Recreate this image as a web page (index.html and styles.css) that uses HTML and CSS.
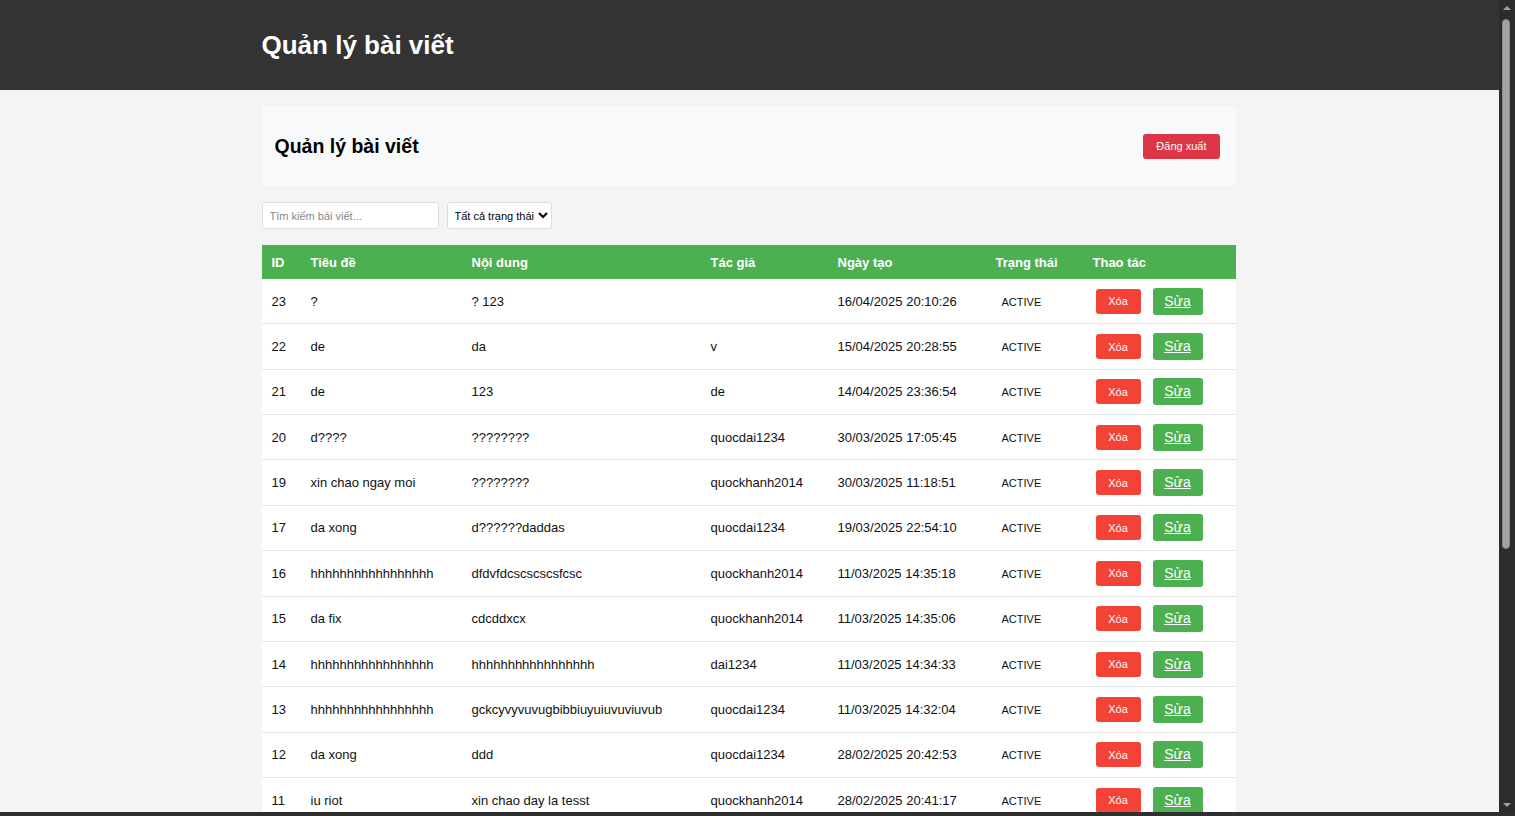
FILE: index.html
```html
<!DOCTYPE html>
<html lang="vi">
<head>
<meta charset="utf-8">
<title>Quản lý bài viết</title>
<link rel="stylesheet" href="styles.css">
</head>
<body>
<header class="topbar">
  <div class="container">
    <h1 class="brand">Quản lý bài viết</h1>
  </div>
</header>
<main class="container">
  <section class="panel">
    <h2 class="panel-title">Quản lý bài viết</h2>
    <button class="btn-logout">Đăng xuất</button>
  </section>
  <div class="filters">
    <input class="search" type="text" placeholder="Tìm kiếm bài viết...">
    <select class="status-select">
      <option>Tất cả trạng thái</option>
    </select>
  </div>
  <table class="posts">
    <colgroup>
      <col class="c-id"><col class="c-title"><col class="c-content"><col class="c-author"><col class="c-date"><col class="c-status"><col class="c-actions">
    </colgroup>
    <thead>
      <tr><th>ID</th><th>Tiêu đề</th><th>Nội dung</th><th>Tác giả</th><th>Ngày tạo</th><th>Trạng thái</th><th>Thao tác</th></tr>
    </thead>
    <tbody>
      <tr><td>23</td><td>?</td><td>? 123</td><td></td><td>16/04/2025 20:10:26</td><td><span class="status">ACTIVE</span></td><td><button class="btn-del">Xóa</button><a class="btn-edit" href="#">Sửa</a></td></tr>
      <tr><td>22</td><td>de</td><td>da</td><td>v</td><td>15/04/2025 20:28:55</td><td><span class="status">ACTIVE</span></td><td><button class="btn-del">Xóa</button><a class="btn-edit" href="#">Sửa</a></td></tr>
      <tr><td>21</td><td>de</td><td>123</td><td>de</td><td>14/04/2025 23:36:54</td><td><span class="status">ACTIVE</span></td><td><button class="btn-del">Xóa</button><a class="btn-edit" href="#">Sửa</a></td></tr>
      <tr><td>20</td><td>d????</td><td>????????</td><td>quocdai1234</td><td>30/03/2025 17:05:45</td><td><span class="status">ACTIVE</span></td><td><button class="btn-del">Xóa</button><a class="btn-edit" href="#">Sửa</a></td></tr>
      <tr><td>19</td><td>xin chao ngay moi</td><td>????????</td><td>quockhanh2014</td><td>30/03/2025 11:18:51</td><td><span class="status">ACTIVE</span></td><td><button class="btn-del">Xóa</button><a class="btn-edit" href="#">Sửa</a></td></tr>
      <tr><td>17</td><td>da xong</td><td>d??????daddas</td><td>quocdai1234</td><td>19/03/2025 22:54:10</td><td><span class="status">ACTIVE</span></td><td><button class="btn-del">Xóa</button><a class="btn-edit" href="#">Sửa</a></td></tr>
      <tr><td>16</td><td>hhhhhhhhhhhhhhhhh</td><td>dfdvfdcscscscsfcsc</td><td>quockhanh2014</td><td>11/03/2025 14:35:18</td><td><span class="status">ACTIVE</span></td><td><button class="btn-del">Xóa</button><a class="btn-edit" href="#">Sửa</a></td></tr>
      <tr><td>15</td><td>da fix</td><td>cdcddxcx</td><td>quockhanh2014</td><td>11/03/2025 14:35:06</td><td><span class="status">ACTIVE</span></td><td><button class="btn-del">Xóa</button><a class="btn-edit" href="#">Sửa</a></td></tr>
      <tr><td>14</td><td>hhhhhhhhhhhhhhhhh</td><td>hhhhhhhhhhhhhhhhh</td><td>dai1234</td><td>11/03/2025 14:34:33</td><td><span class="status">ACTIVE</span></td><td><button class="btn-del">Xóa</button><a class="btn-edit" href="#">Sửa</a></td></tr>
      <tr><td>13</td><td>hhhhhhhhhhhhhhhhh</td><td>gckcyvyvuvugbibbiuyuiuvuviuvub</td><td>quocdai1234</td><td>11/03/2025 14:32:04</td><td><span class="status">ACTIVE</span></td><td><button class="btn-del">Xóa</button><a class="btn-edit" href="#">Sửa</a></td></tr>
      <tr><td>12</td><td>da xong</td><td>ddd</td><td>quocdai1234</td><td>28/02/2025 20:42:53</td><td><span class="status">ACTIVE</span></td><td><button class="btn-del">Xóa</button><a class="btn-edit" href="#">Sửa</a></td></tr>
      <tr><td>11</td><td>iu riot</td><td>xin chao day la tesst</td><td>quockhanh2014</td><td>28/02/2025 20:41:17</td><td><span class="status">ACTIVE</span></td><td><button class="btn-del">Xóa</button><a class="btn-edit" href="#">Sửa</a></td></tr>
    </tbody>
  </table>
</main>
<div class="scrollbar">
  <span class="sb-arrow sb-up"></span>
  <span class="sb-thumb"></span>
  <span class="sb-arrow sb-down"></span>
</div>
<div class="frame-bottom"></div>
</body>
</html>
```
FILE: styles.css
```css
html {
  overflow: hidden;
}
html, body {
  margin: 0;
  padding: 0;
}
body {
  background: #f4f4f4;
  font-family: "Liberation Sans", Arial, sans-serif;
  color: #222;
  margin-right: 16px;
  height: 816px;
  overflow: hidden;
}
.container {
  width: 974px;
  margin: 0 0 0 calc((100% - 974px) / 2 - 1px);
}
.topbar {
  background: #333333;
  height: 90px;
  display: flex;
  align-items: center;
}
.brand {
  margin: 0;
  color: #fff;
  font-size: 26px;
  font-weight: bold;
}
main.container {
  padding-top: 16px;
}
.panel {
  background: #f8f9fa;
  height: 80px;
  border-radius: 4px;
  display: flex;
  align-items: center;
  justify-content: space-between;
  padding: 0 16px 0 13px;
  box-sizing: border-box;
}
.panel-title {
  margin: 0;
  font-size: 19.5px;
  font-weight: bold;
  color: #000;
}
.btn-logout {
  background: #dc3545;
  color: #fff;
  border: none;
  border-radius: 3px;
  font-family: "Liberation Sans", Arial, sans-serif;
  font-size: 11px;
  height: 25px;
  padding: 0 13px;
}
.filters {
  display: flex;
  gap: 8px;
  margin: 16px 0;
}
.search {
  width: 177px;
  height: 27px;
  box-sizing: border-box;
  border: 1px solid #ddd;
  border-radius: 3px;
  padding: 0 7px;
  font-family: "Liberation Sans", Arial, sans-serif;
  font-size: 11px;
  background: #fff;
}
.search::placeholder {
  color: #888;
}
.status-select {
  height: 27px;
  box-sizing: border-box;
  border: 1px solid #ddd;
  border-radius: 3px;
  font-family: "Liberation Sans", Arial, sans-serif;
  font-size: 11px;
  background: #fff;
  color: #000;
  padding: 0 0 0 3px;
}
.posts {
  width: 974px;
  border-collapse: collapse;
  table-layout: fixed;
  background: #fff;
  font-size: 13px;
}
.c-id { width: 39px; }
.c-title { width: 161px; }
.c-content { width: 239px; }
.c-author { width: 127px; }
.c-date { width: 158px; }
.c-status { width: 97px; }
.c-actions { width: 153px; }
.posts th {
  background: #4caf50;
  color: #fff;
  text-align: left;
  font-weight: bold;
  height: 34px;
  padding: 0 10px;
  box-sizing: border-box;
}
.posts td {
  height: 44.36px;
  padding: 0 10px;
  border-bottom: 1px solid #e4e4e4;
  color: #111;
  white-space: nowrap;
}
.status {
  font-size: 11px;
  padding: 0 6px;
  color: #111;
}
.btn-del {
  background: #f44336;
  color: #fff;
  border: none;
  border-radius: 3px;
  font-family: "Liberation Sans", Arial, sans-serif;
  font-size: 11px;
  width: 45px;
  height: 25px;
  margin: 0 12px 0 3px;
  vertical-align: middle;
}
.btn-edit {
  display: inline-block;
  background: #4caf50;
  color: #fff;
  font-size: 14px;
  border-radius: 3px;
  width: 50px;
  height: 27px;
  line-height: 27px;
  text-align: center;
  vertical-align: middle;
}
.scrollbar {
  position: fixed;
  top: 0;
  right: 0;
  width: 16px;
  height: 816px;
  background: #2c2c2c;
}
.sb-thumb {
  position: absolute;
  left: 3px;
  top: 19px;
  width: 8px;
  height: 530px;
  border-radius: 4px;
  background: #a3a3a3;
  border: 1px solid #8a8a8a;
  box-sizing: border-box;
}
.sb-arrow {
  position: absolute;
  left: 4px;
  width: 0;
  height: 0;
  border-left: 4px solid transparent;
  border-right: 4px solid transparent;
}
.sb-up {
  top: 6px;
  border-bottom: 4px solid #a3a3a3;
}
.sb-down {
  bottom: 9px;
  border-top: 4px solid #a3a3a3;
}
.frame-bottom {
  position: fixed;
  left: 0;
  right: 0;
  bottom: 0;
  height: 4px;
  background: #2f2f2f;
}
```
